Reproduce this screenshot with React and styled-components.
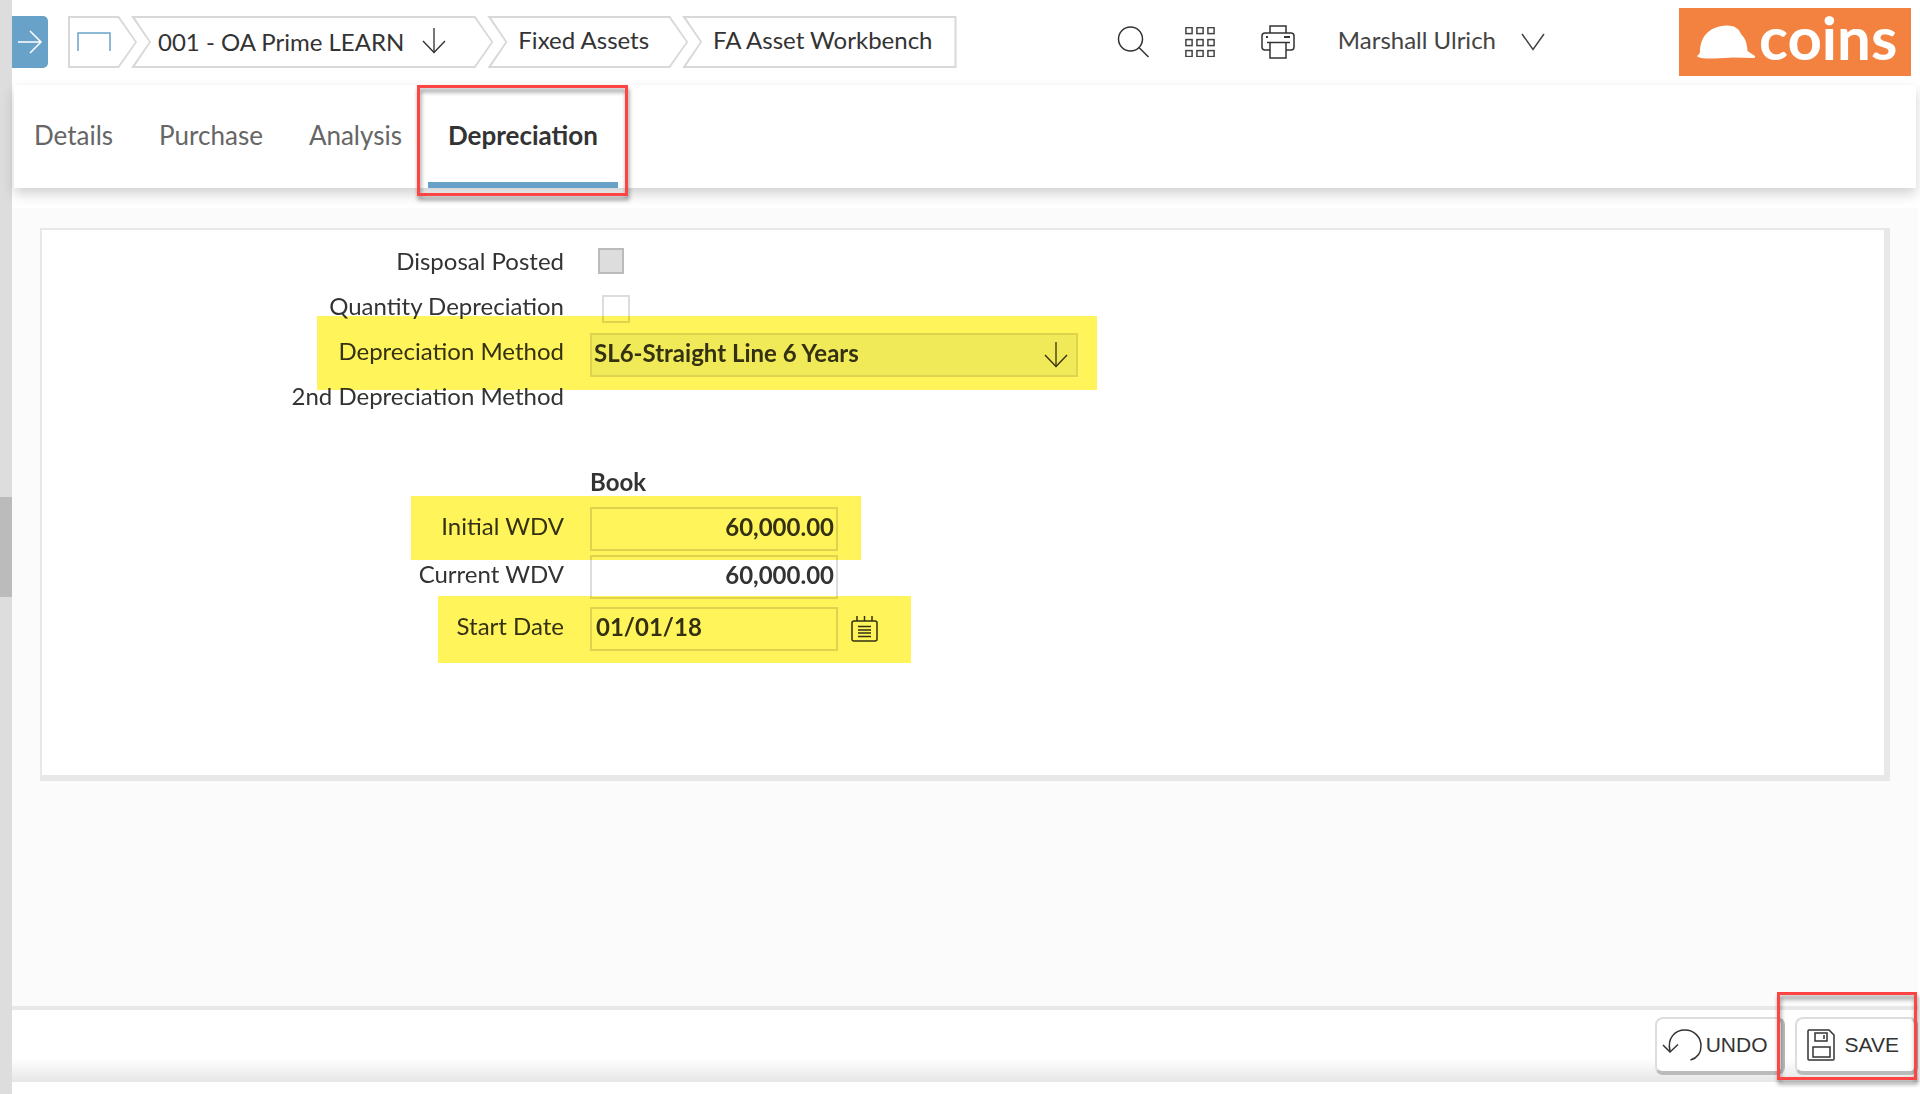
import React from "react";
import styled, { createGlobalStyle, css } from "styled-components";

const GlobalStyle = createGlobalStyle`
  *, *::before, *::after { box-sizing: border-box; }
  body {
    margin: 0;
    background: #fff;
    color: #333;
    font-family: Lato, sans-serif;
    font-size: 24px;
  }
  button, input, select { font: inherit; color: inherit; margin: 0; }
`;

const Page = styled.div`
  display: flex;
  min-height: 100vh;
`;

const Rail = styled.aside`
  display: flex;
  flex-direction: column;
  justify-content: center;
  width: 12px;
  flex: none;
  background: #ddd;
`;

const RailHandle = styled.div`
  height: 100px;
  background: #bbb;
`;

const Main = styled.main`
  display: flex;
  flex-direction: column;
  flex: 1;
  min-width: 0;
  padding: 0 2px 12px 0;
`;

const Header = styled.header`
  display: flex;
  align-items: flex-start;
  height: 85px;
  padding: 8px 7px 0 0;
`;

const MenuToggle = styled.button`
  display: grid;
  place-items: center;
  width: 36px;
  height: 52px;
  margin-top: 8px;
  padding: 0;
  border: 0;
  border-radius: 0 5px 5px 0;
  background: #68a2c8;
  color: #fff;
`;

const Crumbs = styled.nav`
  display: flex;
  margin: 8px 0 0 20px;
`;

const shapes = {
  first: {
    outer: "0 0, calc(100% - 18px) 0, 100% 50%, calc(100% - 18px) 100%, 0 100%",
    inner: "2px 0, calc(100% - 19px) 0, calc(100% - 2px) 50%, calc(100% - 19px) 100%, 2px 100%",
  },
  middle: {
    outer: "0 0, calc(100% - 18px) 0, 100% 50%, calc(100% - 18px) 100%, 0 100%, 18px 50%",
    inner: "4px 0, calc(100% - 19px) 0, calc(100% - 2px) 50%, calc(100% - 19px) 100%, 4px 100%, 20px 50%",
  },
  last: {
    outer: "0 0, 100% 0, 100% 100%, 0 100%, 18px 50%",
    inner: "4px 0, calc(100% - 2px) 0, calc(100% - 2px) 100%, 4px 100%, 20px 50%",
  },
};

const Crumb = styled.a`
  position: relative;
  display: flex;
  align-items: center;
  gap: 18px;
  height: 52px;
  padding: ${(p) => p.$pad};
  background: #d8d8d8;
  color: #333;
  text-decoration: none;
  white-space: nowrap;
  clip-path: polygon(${(p) => shapes[p.$shape].outer});
  & + & { margin-left: -6px; }
  &::before {
    content: "";
    position: absolute;
    inset: 2px 0;
    background: #fff;
    clip-path: polygon(${(p) => shapes[p.$shape].inner});
  }
  & > * { position: relative; }
`;

const Tools = styled.div`
  display: flex;
  align-items: center;
  height: 52px;
  margin-top: 8px;
  margin-left: auto;
`;

const IconButton = styled.button`
  display: grid;
  place-items: center;
  padding: 0;
  border: 0;
  background: none;
  margin-left: ${(p) => p.$gap || 0}px;
  color: #333;
`;

const UserButton = styled(IconButton)`
  display: flex;
  align-items: center;
  gap: 25px;
  color: #444;
  white-space: nowrap;
  & > span { padding-bottom: 6px; }
`;

const Logo = styled.a`
  display: flex;
  align-items: center;
  width: 232px;
  height: 68px;
  flex: none;
  margin-left: 134px;
  padding: 0 18px;
  background: #f38240;
  color: #fff;
  text-decoration: none;
  & > svg { flex: none; }
`;

const LogoWord = styled.span`
  margin-left: 3px;
  padding-bottom: 10px;
  font-size: 60px;
  font-weight: 700;
  line-height: 60px;
`;

const TabBar = styled.nav`
  position: relative;
  display: flex;
  gap: 6px;
  height: 103px;
  margin: 0 2px;
  background: #fff;
  box-shadow: 0 6px 12px rgba(0, 0, 0, 0.18);
`;

const Tab = styled.a`
  position: relative;
  display: flex;
  align-items: center;
  padding: 2px 20px 0;
  border-bottom: 6px solid ${(p) => (p.$active ? "#68a2c8" : "transparent")};
  color: ${(p) => (p.$active ? "#333" : "#666")};
  font-size: 26px;
  font-weight: ${(p) => (p.$active ? 700 : 400)};
  text-decoration: none;
`;

const marker = css`
  content: "";
  position: absolute;
  z-index: 2;
  border: 3px solid #ff4444;
  filter: drop-shadow(1px 4px 2px rgba(0, 0, 0, 0.45));
  pointer-events: none;
`;

const MarkedTab = styled(Tab)`
  &::after {
    ${marker}
    inset: 0 -10px -14px -11px;
  }
`;

const Body = styled.section`
  flex: 1;
  margin-top: 20px;
  padding: 20px 28px;
  background: #fbfbfb;
`;

const Panel = styled.form`
  min-height: 553px;
  padding-top: 9px;
  border: 2px solid #e8e8e8;
  border-right-width: 6px;
  border-bottom-width: 6px;
  background: #fff;
  isolation: isolate;
`;

const Row = styled.div`
  position: relative;
  display: flex;
  align-items: flex-start;
  height: 45px;
  line-height: 44px;
`;

const FieldRow = styled(Row)`
  height: 44px;
  margin-bottom: ${(p) => p.$after || 0}px;
  line-height: 38px;
`;

const Highlight = styled.div`
  position: absolute;
  z-index: 1;
  top: ${(p) => p.$top}px;
  left: ${(p) => p.$left}px;
  width: ${(p) => p.$width}px;
  height: ${(p) => p.$height}px;
  background: #fff45a;
  mix-blend-mode: multiply;
  pointer-events: none;
`;

const Label = styled.label`
  width: 548px;
  flex: none;
  padding-right: 26px;
  text-align: right;
`;

const Check = styled.input`
  appearance: none;
  width: 28px;
  height: 28px;
  margin: 11px 0 0 12px;
  border: 2px solid #ddd;
  background: #fff;
  &:disabled {
    width: 26px;
    height: 26px;
    margin: 9px 0 0 8px;
    border-color: #bbb;
    background: #ddd;
  }
`;

const SelectBox = styled.div`
  position: relative;
  display: flex;
  width: 488px;
  height: 44px;
  margin-top: 4px;
  & > svg {
    position: absolute;
    right: 10px;
    top: 9px;
    pointer-events: none;
  }
`;

const Select = styled.select`
  appearance: none;
  width: 100%;
  padding: 0 40px 4px 2px;
  border: 2px solid #ddd;
  border-radius: 0;
  background: #f0f4f8;
  font-weight: 700;
  line-height: 36px;
`;

const TextInput = styled.input`
  width: 248px;
  height: 44px;
  padding: 0 2px 6px 4px;
  border: 2px solid #ddd;
  background: #fff;
  font-weight: 700;
  text-align: ${(p) => (p.$numeric ? "right" : "left")};
`;

const DateButton = styled(IconButton)`
  margin: 8px 0 0 13px;
`;

const ColumnHead = styled(Row)`
  margin: 41px 0 2px;
  padding-left: 548px;
  font-weight: 700;
`;

const Footer = styled.footer`
  display: flex;
  justify-content: flex-end;
  gap: 10px;
  height: 76px;
  padding-top: 7px;
  border-top: 4px solid #e8e8e8;
  background: linear-gradient(to bottom, #fff 48px, #e6e6e6 72px);
`;

const ActionButton = styled.button`
  position: relative;
  display: flex;
  align-items: center;
  gap: ${(p) => p.$gap}px;
  height: 58px;
  padding: ${(p) => p.$pad};
  border: 2px solid #ddd;
  border-right: 4px solid #bbb;
  border-bottom: 4px solid #bbb;
  border-radius: 8px;
  background: #fff;
  font-family: "Liberation Sans", Arial, sans-serif;
  font-size: 21px;
`;

const MarkedAction = styled(ActionButton)`
  &::after {
    ${marker}
    inset: -27px -3px -9px -20px;
  }
`;

const Svg = ({ w, h, stroke = 1.5, children }) => (
  <svg width={w} height={h} viewBox={`0 0 ${w} ${h}`} fill="none" stroke="currentColor" strokeWidth={stroke} aria-hidden="true">
    {children}
  </svg>
);

const ArrowRight = () => (
  <Svg w={26} h={24}>
    <path d="M1 12H24M13 1L24 12L13 23" />
  </Svg>
);

const ArrowDown = () => (
  <Svg w={24} h={26} stroke={1.4}>
    <path d="M12 0V25" stroke="#777" strokeWidth="2" />
    <path d="M1 13L12 24.500L23 13" />
  </Svg>
);

const HomeIcon = () => (
  <svg width="34" height="20" viewBox="0 0 34 20" fill="none" stroke="#68a2c8" strokeWidth="1.500" aria-hidden="true">
    <path d="M1 19V1H33V19" />
  </svg>
);

const SearchIcon = () => (
  <Svg w={32} h={32}>
    <circle cx="13.500" cy="13" r="12" />
    <path d="M22 21.500L31.500 31" />
  </Svg>
);

const GridIcon = () => (
  <Svg w={30} h={30}>
    {[0, 11, 22].map((x) =>
      [0, 12, 23].map((y) => (
        <rect key={`${x}-${y}`} x={x + 0.9} y={y + 0.6} width="6.200" height="6" stroke="#444" />
      ))
    )}
  </Svg>
);

const PrinterIcon = () => (
  <Svg w={34} h={34}>
    <path d="M9 8V1H25V8" />
    <path d="M9 25H4Q1 25 1 22V11Q1 8 4 8H30Q33 8 33 11V22Q33 25 30 25H25" />
    <path d="M6 17.500H29" />
    <path d="M9 17.500V33H25V17.500" />
    <path d="M5 12H7M23 12H29" strokeWidth="2" />
  </Svg>
);

const ChevronIcon = () => (
  <Svg w={24} h={18}>
    <path d="M1 1L12 16.500L23 1" />
  </Svg>
);

const HelmetIcon = () => (
  <svg width="59" height="34" viewBox="0 0 59 34" fill="#fff" aria-hidden="true">
    <path d="M0 31Q3 29 3 27C3 13 11 1 30 0.500C38 0.500 42 4 44 9C49 14 50 19 50.500 26L58 31Q58.500 33 56 33L36 32.500L18 33.500Q6 34 1 32Z" />
  </svg>
);

const CalendarIcon = () => (
  <Svg w={27} h={27}>
    <rect x="1" y="6" width="25" height="20" rx="2" />
    <path d="M6 1V6M13.500 1V6M21 1V6M7 11.500H20M7 15H20M7 18H20M7 21.500H20" />
  </Svg>
);

const UndoIcon = () => (
  <Svg w={40} h={34}>
    <path d="M8 23C5 10 13 2 23 2C32 2 39 9 39 18C39 25 35 30 28.500 32" />
    <path d="M1 17L8 24L16 16.500" />
  </Svg>
);

const SaveIcon = () => (
  <Svg w={28} h={32}>
    <path d="M1 30V2Q1 1 2 1H22L27 6V30Q27 31 26 31H2Q1 31 1 30Z" />
    <rect x="8" y="4" width="12" height="8" />
    <path d="M17 6V10" />
    <rect x="6" y="18" width="17" height="10" />
  </Svg>
);

export default function App() {
  return (
    <>
      <GlobalStyle />
      <Page>
        <Rail>
          <RailHandle />
        </Rail>
        <Main>
          <Header>
            <MenuToggle type="button" aria-label="Open menu">
              <ArrowRight />
            </MenuToggle>
            <Crumbs aria-label="Breadcrumb">
              <Crumb href="#home" aria-label="Home" $shape="first" $pad="0 26px 0 9px">
                <HomeIcon />
              </Crumb>
              <Crumb href="#company" $shape="middle" $pad="0 47px 2px 27px">
                <span>001 - OA Prime LEARN</span>
                <ArrowDown />
              </Crumb>
              <Crumb href="#assets" $shape="middle" $pad="0 39px 6px 31px">
                <span>Fixed Assets</span>
              </Crumb>
              <Crumb href="#workbench" $shape="last" $pad="0 24px 6px 31px">
                <span>FA Asset Workbench</span>
              </Crumb>
            </Crumbs>
            <Tools>
              <IconButton type="button" aria-label="Search">
                <SearchIcon />
              </IconButton>
              <IconButton type="button" aria-label="Applications" $gap={36}>
                <GridIcon />
              </IconButton>
              <IconButton type="button" aria-label="Print" $gap={46}>
                <PrinterIcon />
              </IconButton>
              <UserButton type="button" $gap={43}>
                <span>Marshall Ulrich</span>
                <ChevronIcon />
              </UserButton>
            </Tools>
            <Logo href="#coins">
              <HelmetIcon />
              <LogoWord>coins</LogoWord>
            </Logo>
          </Header>

          <TabBar>
            <Tab href="#details">Details</Tab>
            <Tab href="#purchase">Purchase</Tab>
            <Tab href="#analysis">Analysis</Tab>
            <MarkedTab href="#depreciation" aria-current="page" $active>
              Depreciation
            </MarkedTab>
          </TabBar>

          <Body>
            <Panel>
              <Row>
                <Label htmlFor="disposal">Disposal Posted</Label>
                <Check id="disposal" type="checkbox" disabled />
              </Row>
              <Row>
                <Label htmlFor="quantity">Quantity Depreciation</Label>
                <Check id="quantity" type="checkbox" />
              </Row>
              <Row>
                <Label htmlFor="method">Depreciation Method</Label>
                <SelectBox>
                  <Select id="method" defaultValue="SL6">
                    <option value="SL6">SL6-Straight Line 6 Years</option>
                  </Select>
                  <ArrowDown />
                </SelectBox>
                <Highlight $top={-13} $left={275} $width={780} $height={74} />
              </Row>
              <Row>
                <Label as="span">2nd Depreciation Method</Label>
              </Row>
              <ColumnHead>Book</ColumnHead>
              <FieldRow $after={4}>
                <Label htmlFor="initial">Initial WDV</Label>
                <TextInput id="initial" $numeric defaultValue="60,000.00" />
                <Highlight $top={-11} $left={369} $width={450} $height={64} />
              </FieldRow>
              <FieldRow $after={8}>
                <Label htmlFor="current">Current WDV</Label>
                <TextInput id="current" $numeric defaultValue="60,000.00" />
              </FieldRow>
              <FieldRow>
                <Label htmlFor="start">Start Date</Label>
                <TextInput id="start" defaultValue="01/01/18" />
                <DateButton type="button" aria-label="Choose date">
                  <CalendarIcon />
                </DateButton>
                <Highlight $top={-11} $left={396} $width={473} $height={67} />
              </FieldRow>
            </Panel>
          </Body>

          <Footer>
            <ActionButton type="button" $gap={4} $pad="0 13px 0 5px">
              <UndoIcon />
              UNDO
            </ActionButton>
            <MarkedAction type="button" $gap={10} $pad="0 15px 0 10px">
              <SaveIcon />
              SAVE
            </MarkedAction>
          </Footer>
        </Main>
      </Page>
    </>
  );
}
